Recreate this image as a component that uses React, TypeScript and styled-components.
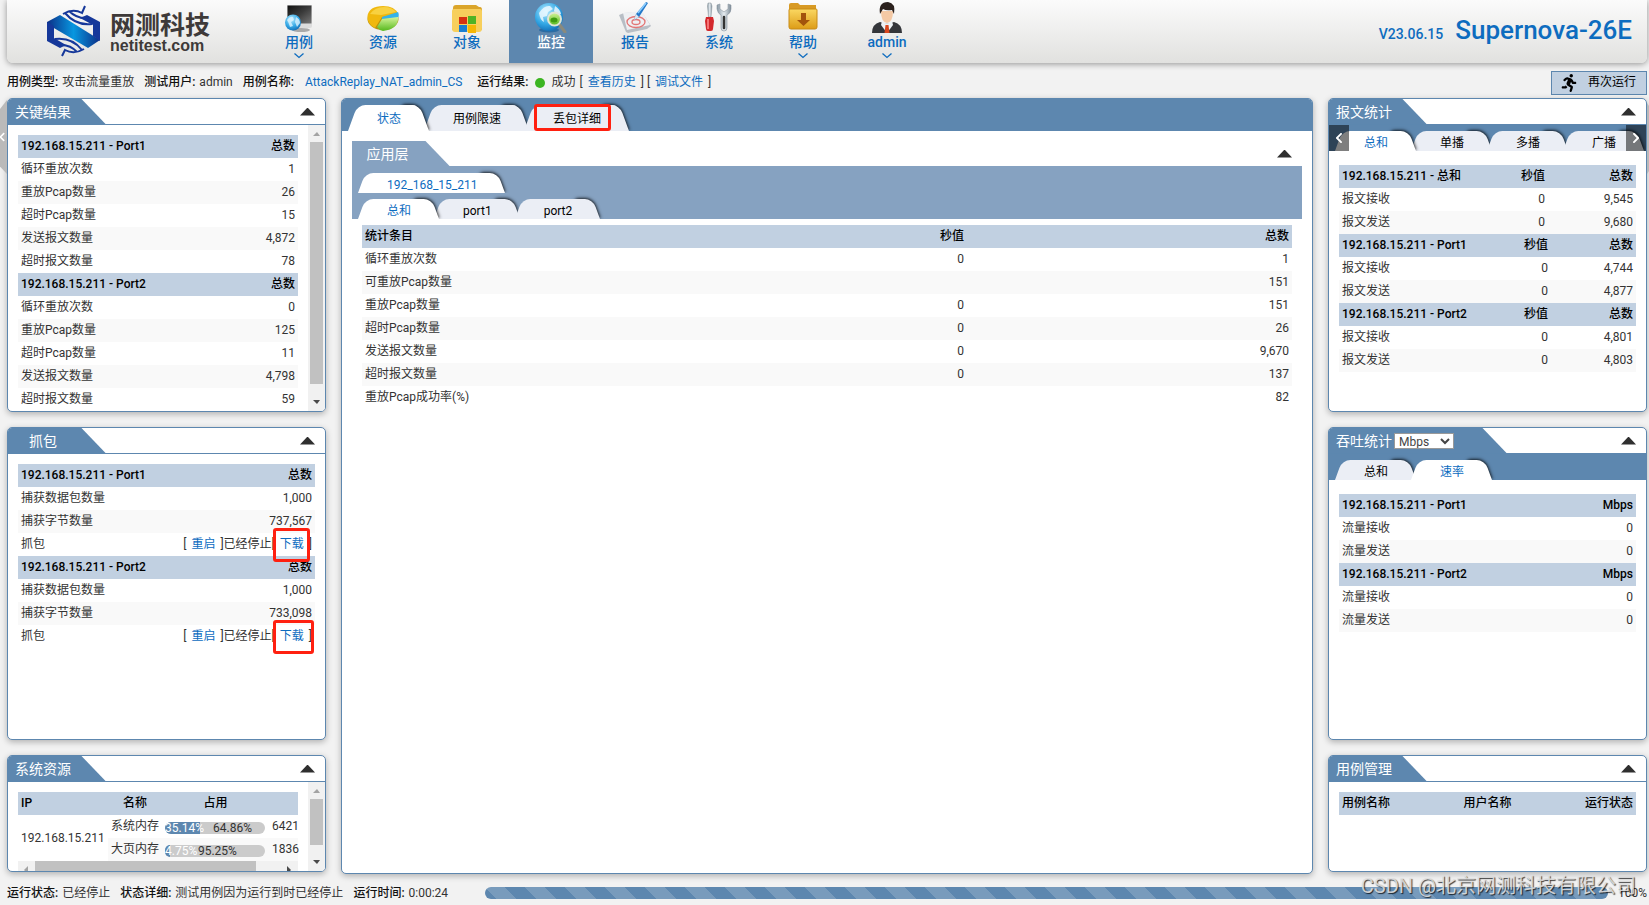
import React from 'react';
import styled, { createGlobalStyle, css } from 'styled-components';
import { FaRunning, FaChevronLeft, FaChevronRight } from 'react-icons/fa';

const c = {
  blue: '#5d87af',
  soft: '#86a2c1',
  head: '#c1d0e1',
  link: '#0d6cbf',
  text: '#333333',
  red: '#ff2010',
};

const GlobalStyle = createGlobalStyle`
  * { box-sizing: border-box; }
  body {
    margin: 0;
    background: #f2f2f2;
    color: ${c.text};
    font: 12px/23px Roboto, "Noto Sans CJK SC", sans-serif;
  }
  button, select { font: inherit; color: inherit; }
  a { color: ${c.link}; text-decoration: none; }
`;

const Page = styled.div`
  position: relative;
  display: flex;
  flex-direction: column;
  min-height: 100vh;
  overflow: hidden;
`;

/* ---------- top bar ---------- */

const TopBar = styled.header`
  display: flex;
  height: 63px;
  margin: 0 2px 0 7px;
  border-radius: 0 0 6px 6px;
  background: linear-gradient(#fbfbfb, #e1e1df);
  box-shadow: 0 1px 6px rgba(0, 0, 0, 0.4);
`;

const Brand = styled.a`
  display: flex;
  gap: 9px;
  width: 250px;
  padding: 5px 0 0 39px;
  color: #3e3a39;
`;

const BrandText = styled.span`
  display: flex;
  flex-direction: column;
  padding-top: 8px;
  font-weight: 700;
`;

const BrandName = styled.span`
  font-size: 25px;
  line-height: 26px;
`;

const BrandSite = styled.span`
  font: 700 16px/14px "Liberation Sans", sans-serif;
`;

const Nav = styled.nav`
  display: flex;
  flex: 1;
`;

const NavItem = styled.a<{ $active?: boolean }>`
  display: flex;
  flex-direction: column;
  align-items: center;
  width: 84px;
  padding-top: 1px;
  color: ${p => (p.$active ? '#fff' : c.link)};
  background: ${p => (p.$active ? c.blue : 'none')};
  font-size: 14px;
  font-weight: 500;
  line-height: 18px;
`;

const MenuMark = styled.svg`
  margin-top: 2px;
`;

const Product = styled.div`
  display: flex;
  align-items: baseline;
  gap: 12px;
  padding: 14px 15px 0 0;
  color: ${c.link};
  font-weight: 500;
  font-size: 14px;
  line-height: 32px;
`;

const ProductName = styled.strong`
  font-size: 26px;
  font-weight: 500;
`;

/* ---------- run summary ---------- */

const Summary = styled.div`
  display: flex;
  align-items: center;
  gap: 10px;
  height: 35px;
  padding: 4px 2px 0 7px;
`;

const Pair = styled.span`
  display: flex;
  align-items: center;
  gap: 4px;
  white-space: nowrap;
  & > b { font-weight: 500; color: #111; }
`;

const CaseLink = styled.a`
  padding: 0 5px 0 7px;
`;

const Dot = styled.i`
  width: 10px;
  height: 10px;
  margin: 0 3px 0 2px;
  border-radius: 50%;
  background: #3cb521;
`;

const InlineLink = styled.a`
  margin: 0 5px;
`;

const RerunButton = styled.button`
  display: flex;
  align-items: center;
  gap: 10px;
  height: 24px;
  margin-left: auto;
  padding: 0 10px 0 8px;
  border: 1px solid ${c.blue};
  background: ${c.head};
  color: #000;
`;

/* ---------- panels ---------- */

const Main = styled.main`
  display: grid;
  grid-template-columns: 319px minmax(0, 1fr) 319px;
  gap: 15px;
  flex: 1;
  padding: 0 2px 0 7px;
`;

const Column = styled.div`
  display: flex;
  flex-direction: column;
  gap: 15px;
  padding-bottom: 2px;
`;

const Panel = styled.section<{ $grow?: number }>`
  display: flex;
  flex-direction: column;
  flex: ${p => p.$grow ?? 1} 1 0;
  min-height: 0;
  overflow: hidden;
  border: 1px solid ${c.blue};
  border-radius: 5px;
  background: #fff;
  box-shadow: 0 2px 6px rgba(0, 0, 0, 0.28);
`;

const PanelHead = styled.div<{ $soft?: boolean }>`
  display: flex;
  flex: none;
  align-items: center;
  justify-content: space-between;
  height: 26px;
  padding-right: 10px;
  border-bottom: 1px solid ${p => (p.$soft ? c.soft : c.blue)};
`;

const PanelTitle = styled.h2<{ $soft?: boolean }>`
  display: flex;
  align-items: center;
  justify-content: center;
  min-width: 98px;
  height: 26px;
  margin: 0;
  padding: 0 ${p => (p.$soft ? '41px 0 14px' : '35px 0 7px')};
  background: ${p => (p.$soft ? c.soft : c.blue)};
  clip-path: polygon(0 0, calc(100% - 25px) 0, 100% 100%, 0 100%);
  color: #fff;
  font-size: 14px;
  font-weight: 400;
  line-height: 24px;
`;

const Collapse = styled.button`
  width: 15px;
  height: 8px;
  padding: 0;
  border: 0;
  background: #2f2f2f;
  clip-path: polygon(50% 0, 100% 100%, 0 100%);
`;

const Unit = styled.select`
  width: 60px;
  height: 16px;
  margin: 0 18px 0 2px;
  padding: 0;
  border: 1px solid #999;
  background: #fff;
  color: #444;
  font-size: 12px;
  line-height: 14px;
`;

const PanelBody = styled.div<{ $scroll?: boolean; $top?: number }>`
  display: flex;
  flex: 1 1 0;
  min-height: 0;
  overflow: hidden;
  padding: ${p => p.$top ?? 10}px ${p => (p.$scroll ? 0 : 10)}px 0 10px;
`;

const Content = styled.div`
  flex: 1;
  min-width: 0;
`;

/* ---------- tabs ---------- */

const TabStrip = styled.div<{ $soft?: boolean }>`
  position: relative;
  display: flex;
  flex: none;
  padding: 6px 0 0 9px;
  background: ${p => (p.$soft ? c.soft : c.blue)};
  overflow: hidden;
`;

const Tab = styled.button<{ $active?: boolean; $tall?: boolean }>`
  position: relative;
  z-index: ${p => (p.$active ? 1 : 0)};
  flex: none;
  isolation: isolate;
  height: ${p => (p.$tall ? 26 : 20)}px;
  padding: ${p => (p.$tall ? 3 : 4)}px 26px 0;
  border: 0;
  background: none;
  color: ${p => (p.$active ? c.link : '#000')};
  line-height: ${p => (p.$tall ? 23 : 16)}px;

  &::before,
  &::after {
    content: '';
    position: absolute;
    z-index: -1;
    top: 0;
    bottom: 0;
    border-radius: 8px 8px 0 0;
    background: ${p => (p.$active ? '#fff' : '#ebeef5')};
  }
  &::before {
    left: -3px;
    right: 16px;
    transform: skewX(-20deg);
    transform-origin: bottom;
  }
  &::after {
    z-index: -2;
    right: -2px;
    width: 22px;
    transform: skewX(20deg);
    transform-origin: bottom;
    box-shadow: 1px -1px 3px rgba(0, 0, 0, 0.8);
  }
`;

const StripArrow = styled.button<{ $right?: boolean }>`
  position: absolute;
  z-index: 2;
  top: 0;
  bottom: 0;
  ${p => (p.$right ? css`right: 0;` : css`left: 0;`)}
  display: flex;
  align-items: center;
  justify-content: center;
  width: 20px;
  padding: 0;
  border: 0;
  background: rgba(0, 0, 0, 0.5);
  color: #fff;
`;

/* ---------- tables ---------- */

const Table = styled.table`
  width: 100%;
  table-layout: fixed;
  border-collapse: collapse;
  th, td {
    height: 23px;
    padding: 0 3px;
    line-height: 23px;
    text-align: right;
    white-space: nowrap;
  }
  th { background: ${c.head}; color: #000; font-weight: 500; }
  th:first-child, td:first-child { text-align: left; }
  tbody tr:nth-child(even) { background: #f9f9f9; }
`;

const ManageTable = styled(Table)`
  th:nth-child(2) { text-align: center; }
`;

const ResourceTable = styled(Table)`
  th:nth-child(n), td:nth-child(n) { text-align: left; padding: 0 0 0 3px; }
  th:nth-child(2), th:nth-child(3) { text-align: center; padding: 0; }
  td[rowspan] { background: #fff; }
`;

const Usage = styled.div`
  display: flex;
  width: 100px;
  height: 12px;
  margin-top: 2px;
  border-radius: 6px;
  background: #cbcbcb;
  line-height: 13px;
`;

const Used = styled.span`
  flex: none;
  min-width: 0;
  height: 12px;
  border-radius: 6px 0 0 6px;
  background: ${c.blue};
  color: #fff;
`;

const Free = styled.span`
  flex: 1;
  text-align: center;
`;

const Marked = styled.span`
  position: relative;
`;

const Mark = styled.i<{ $wide?: boolean }>`
  position: absolute;
  top: -9px;
  left: 1px;
  right: ${p => (p.$wide ? -2 : 2)}px;
  height: 34px;
  border: 3px solid ${c.red};
  border-radius: 3px;
`;

const TabMark = styled.i`
  position: absolute;
  inset: -1px 16px 0 7px;
  border: 3px solid ${c.red};
  border-radius: 3px;
`;

/* ---------- scroll bars ---------- */

const VBar = styled.div`
  display: flex;
  flex: none;
  flex-direction: column;
  align-items: center;
  width: 17px;
  margin: -10px 0 0 10px;
  background: #f1f1f1;
`;

const HBar = styled.div`
  display: flex;
  align-items: center;
  height: 17px;
  background: #f1f1f1;
`;

const BarArrow = styled.span<{ $dim?: boolean; $side?: boolean; $flip?: boolean }>`
  flex: none;
  width: 17px;
  height: 17px;
  background: ${p => (p.$dim ? '#a3a3a3' : '#4a4a4a')};
  clip-path: ${p =>
    p.$side
      ? p.$flip
        ? 'polygon(6px 5px, 10px 9px, 6px 13px)'
        : 'polygon(10px 5px, 6px 9px, 10px 13px)'
      : p.$flip
        ? 'polygon(5px 6px, 12px 6px, 9px 10px)'
        : 'polygon(5px 11px, 12px 11px, 9px 7px)'};
`;

const VThumb = styled.span`
  width: 13px;
  background: #c1c1c1;
`;

const HThumb = styled.span`
  width: 221px;
  height: 17px;
  margin-right: auto;
  background: #c1c1c1;
`;

/* ---------- status bar ---------- */

const StatusBar = styled.footer`
  display: flex;
  align-items: center;
  gap: 10px;
  height: 31px;
  padding: 7px 2px 0 7px;
`;

const Progress = styled.div`
  flex: 1;
  height: 12px;
  margin-left: 27px;
  border-radius: 6px;
  background: ${c.blue}
    linear-gradient(45deg, rgba(255, 255, 255, 0.17) 25%, transparent 25%, transparent 50%,
      rgba(255, 255, 255, 0.17) 50%, rgba(255, 255, 255, 0.17) 75%, transparent 75%) 0 0 / 40px 40px;
`;

const Watermark = styled.span`
  position: absolute;
  right: 13px;
  bottom: 5px;
  color: rgba(225, 225, 225, 0.9);
  font-size: 20px;
  line-height: 28px;
  text-shadow: 1px 1px 1px rgba(0, 0, 0, 0.75);
`;

const SideHandle = styled.button<{ $right?: boolean }>`
  position: absolute;
  top: 100px;
  ${p => (p.$right ? css`right: 0; width: 2px;` : css`left: 0; width: 7px;`)}
  height: 74px;
  padding: 0;
  border: 0;
  background: #bababa;
  color: #fff;
  clip-path: ${p =>
    p.$right ? 'polygon(0 4%, 100% 8%, 100% 96%, 0 100%)' : 'polygon(0 12%, 100% 0, 100% 100%, 0 90%)'};
  svg { display: block; margin-left: -3px; }
`;

/* ---------- drawings ---------- */

const Logo = () => (
  <svg width="55" height="52" viewBox="0 0 55 52" aria-hidden="true">
    <defs>
      <linearGradient id="lg" x1="0" x2="1" y1="0" y2="0">
        <stop offset="0" stopColor="#0c2f87" />
        <stop offset="0.5" stopColor="#0897e0" />
        <stop offset="1" stopColor="#0c2f87" />
      </linearGradient>
    </defs>
    <path d="M1 17 L14 10 L54 35 L42 43 L1 19Z" fill="url(#lg)" />
    <path d="M1 17 L8 21 L8 33 L20 40 L14 43 L1 36Z" fill="#16389a" />
    <path d="M54 36 L47 31 L47 20 L34 13 L41 10 L54 17Z" fill="#16389a" />
    <path d="M17 9 Q27 3 36 8 L39 1 M19 8 Q30 21 46 19 M23 6 Q31 14 42 13 M38 44 Q28 50 19 45 L16 51 M36 45 Q26 32 9 34 M31 47 Q24 39 13 40" fill="none" stroke="#16389a" strokeWidth="2" />
  </svg>
);

const Chevron = () => (
  <MenuMark width="10" height="6" viewBox="0 0 10 6" aria-hidden="true">
    <path d="M0.5 0.5 L5 4.5 L9.5 0.5" fill="none" stroke={c.link} strokeWidth="1.3" />
  </MenuMark>
);

const Defs = () => (
  <defs>
    <linearGradient id="gold" x1="0" y1="0" x2="0" y2="1">
      <stop offset="0" stopColor="#fbd862" />
      <stop offset="1" stopColor="#dd9c17" />
    </linearGradient>
    <radialGradient id="globe" cx="0.4" cy="0.3" r="0.8">
      <stop offset="0" stopColor="#b8ecff" />
      <stop offset="0.55" stopColor="#35a9e6" />
      <stop offset="1" stopColor="#0a62ad" />
    </radialGradient>
    <linearGradient id="screen" x1="0" y1="0" x2="1" y2="1">
      <stop offset="0" stopColor="#111" />
      <stop offset="0.5" stopColor="#3b3b3b" />
      <stop offset="1" stopColor="#777" />
    </linearGradient>
    <linearGradient id="lime" x1="0" y1="0" x2="0" y2="1">
      <stop offset="0" stopColor="#d5f59a" />
      <stop offset="1" stopColor="#55b81c" />
    </linearGradient>
    <linearGradient id="steel" x1="0" y1="0" x2="1" y2="0">
      <stop offset="0" stopColor="#8797a3" />
      <stop offset="0.5" stopColor="#e7edf1" />
      <stop offset="1" stopColor="#7b8a96" />
    </linearGradient>
  </defs>
);

const drawings: Record<string, React.ReactNode> = {
  case: (
    <>
      <path d="M4 4h25v21q0 2-2 2H6q-2 0-2-2z" fill="#dcdcdc" />
      <path d="M4.500 4.500h24v18h-24z" fill="url(#screen)" />
      <ellipse cx="18" cy="29" rx="9" ry="2" fill="#a9a9a9" />
      <circle cx="10" cy="21.500" r="8" fill="url(#globe)" />
      <path d="M4 19q3-4 6-3l1 3-3 2 2 4-3 1q-1-4-3-7zM13 16q4 2 4 6l-3 4-2-5z" fill="#dff4ff" opacity="0.8" />
    </>
  ),
  resource: (
    <>
      <ellipse cx="16" cy="18" rx="15.500" ry="11" fill="#b9930c" />
      <path d="M0.500 15Q2 5 16 5q12 0 15 8L15 16 8 27Q0 23 0.500 15z" fill="#f0b80e" />
      <path d="M3 13Q8 6 17 6q8 0 12 5L14 14z" fill="#fbdc55" opacity="0.7" />
      <path d="M15 16l16-5q1.500 3 0 6l-16 1z" fill="#35b3e8" />
      <path d="M10 26l5-8 16-2q1 12-15 14-4-1-6-4z" fill="url(#lime)" />
    </>
  ),
  object: (
    <>
      <path d="M2 7q0-3 3-3h20l3 2h1q2 0 2 3v18q0 3-3 3H4q-3 0-3-3z" fill="#dba52a" />
      <path d="M1 10q0-2 2-2h26q2 0 2 2v17q0 4-3 4H4q-3 0-3-4z" fill="#f7cf5c" />
      <path d="M8 16h8v7H8z" fill="#d63310" />
      <path d="M17 15h8v8h-8z" fill="#4fb325" />
      <path d="M8 24h8v7H8z" fill="#1a7fd0" />
      <path d="M17 24h8v8h-8z" fill="#f4b706" />
    </>
  ),
  monitor: (
    <>
      <ellipse cx="14" cy="29" rx="10" ry="2.500" fill="#2b6ca3" />
      <circle cx="14" cy="16" r="14" fill="url(#globe)" />
      <path d="M4 12q5-8 11-7l3 3-5 3-1 4-4 1 1 5q-4-2-5-9zM20 5q5 3 6 8l-4 1-3-4z" fill="#eaf8ff" opacity="0.85" />
      <path d="M24 23l6 8" stroke="#8a8a7d" strokeWidth="3" strokeLinecap="round" />
      <circle cx="19.500" cy="18" r="6.500" fill="url(#lime)" stroke="#dfe6d6" strokeWidth="2" />
      <ellipse cx="19" cy="19" rx="3.500" ry="2.500" fill="#3f9d12" />
    </>
  ),
  report: (
    <>
      <path d="M5 12l18-1 9 14-4 3-19 4-2-1L0 14z" fill="#b8bec5" />
      <path d="M4 12l19-2 8 14-23 5z" fill="#eef0f3" />
      <ellipse cx="17" cy="21" rx="9" ry="5.500" fill="none" stroke="#e27676" strokeWidth="1.300" />
      <ellipse cx="17" cy="21" rx="4" ry="2.500" fill="none" stroke="#e27676" strokeWidth="1.300" />
      <path d="M27 1l2 1-9 14-5 3 2-6z" fill="#2378c9" />
      <path d="M27 2l-8 10" stroke="#8fd0ff" strokeWidth="1.500" />
      <path d="M17 13l3 3-5 3z" fill="#dce7f0" />
    </>
  ),
  system: (
    <>
      <path d="M5 2h3l1 3-1 11H5.500L4.500 5z" fill="url(#steel)" stroke="#8b949b" strokeWidth="0.500" />
      <path d="M3 16h7l1 4-1 8q0 2-2 2H5q-2 0-2-2l-1-8z" fill="#d3282c" />
      <path d="M5 18v10" stroke="#ff8d8d" strokeWidth="1.500" />
      <path d="M14 4v4q1 5 4 6v13q0 3 3 3t3-3V14q4-2 4-6V4l-3-1v5l-4 3-4-3V3z" fill="url(#steel)" stroke="#8a969f" strokeWidth="0.600" />
      <path d="M21 16v11" stroke="#333" strokeWidth="2.500" strokeLinecap="round" />
    </>
  ),
  help: (
    <>
      <path d="M2 4q0-2 2-2h7l2 2h16v5H2z" fill="#d89a24" />
      <path d="M2 9q0-1 1-1h26q1 0 1 1v17q0 2-2 2H4q-2 0-2-2z" fill="url(#gold)" stroke="#c88b17" />
      <path d="M14 12h5v7h4l-6.500 6-6.500-6h4z" fill="#a2530c" />
    </>
  ),
  admin: (
    <>
      <path d="M1 32q0-9 8-11l7 2 7-2q8 2 8 11z" fill="#34363a" />
      <path d="M11 20l5 3 5-3 1 4-6 8-6-8z" fill="#eef2f5" />
      <path d="M14.500 24h3l1 8h-5z" fill="#d9481f" />
      <path d="M10 10q0 11 6 12 6-1 6-12z" fill="#f4c9a5" />
      <path d="M9 13Q7 1 17 1q8 1 6 12l-2-4q-6 1-9-1z" fill="#2b211d" />
    </>
  ),
};

const navItems = [
  { id: 'case', label: '用例', menu: true },
  { id: 'resource', label: '资源' },
  { id: 'object', label: '对象' },
  { id: 'monitor', label: '监控', active: true },
  { id: 'report', label: '报告' },
  { id: 'system', label: '系统' },
  { id: 'help', label: '帮助', menu: true },
  { id: 'admin', label: 'admin', menu: true },
];

/* ---------- composed parts ---------- */

type Cell = React.ReactNode;

const Stats = ({ head, rows, widths }: { head: string[]; rows: Cell[][]; widths?: number[] }) => (
  <Table>
    <colgroup>
      <col />
      {(widths ?? [60]).map((w, i) => <col key={i} width={w} />)}
    </colgroup>
    <thead>
      <tr>{head.map((h, i) => <th key={i} scope="col">{h}</th>)}</tr>
    </thead>
    <tbody>
      {rows.map((r, i) => <tr key={i}>{r.map((v, j) => <td key={j}>{v}</td>)}</tr>)}
    </tbody>
  </Table>
);

const Head = ({ title, soft, children }: { title: string; soft?: boolean; children?: React.ReactNode }) => (
  <PanelHead $soft={soft}>
    <PanelTitle $soft={soft}>{title}{children}</PanelTitle>
    <Collapse aria-label={`收起${title}`} />
  </PanelHead>
);

const VScroll = ({ size }: { size: number }) => (
  <VBar aria-hidden="true">
    <BarArrow $dim />
    <VThumb style={{ flex: `${size} 1 0` }} />
    <span style={{ flex: `${1 - size} 1 0` }} />
    <BarArrow $flip />
  </VBar>
);

const Capture = ({ wide }: { wide?: boolean }) => (
  <>
    [<InlineLink href="#restart">重启</InlineLink>]已经停止
    <Marked>
      [<InlineLink href="#download">下载</InlineLink>]
      <Mark $wide={wide} />
    </Marked>
  </>
);

const UsageBar = ({ used, free }: { used: number; free: number }) => (
  <Usage>
    <Used style={{ width: `${used}%` }}>{used.toFixed(2)}%</Used>
    <Free>{free.toFixed(2)}%</Free>
  </Usage>
);

const port = (n: number) => `192.168.15.211 - Port${n}`;

const keyRows = (v: string[]): Cell[][] =>
  ['循环重放次数', '重放Pcap数量', '超时Pcap数量', '发送报文数量', '超时报文数量'].map((k, i) => [k, v[i]]);

export default function App() {
  return (
    <Page>
      <GlobalStyle />
      <TopBar>
        <Brand href="#home">
          <Logo />
          <BrandText>
            <BrandName>网测科技</BrandName>
            <BrandSite>netitest.com</BrandSite>
          </BrandText>
        </Brand>
        <Nav>
          {navItems.map(n => (
            <NavItem key={n.id} href={`#${n.id}`} $active={n.active}>
              <svg width="32" height="32" viewBox="0 0 32 32" aria-hidden="true">
                <Defs />
                {drawings[n.id]}
              </svg>
              {n.label}
              {n.menu && <Chevron />}
            </NavItem>
          ))}
        </Nav>
        <Product>
          V23.06.15 <ProductName>Supernova-26E</ProductName>
        </Product>
      </TopBar>

      <Summary>
        <Pair><b>用例类型:</b>攻击流量重放</Pair>
        <Pair><b>测试用户:</b>admin</Pair>
        <Pair><b>用例名称:</b><CaseLink href="#case-detail">AttackReplay_NAT_admin_CS</CaseLink></Pair>
        <Pair>
          <b>运行结果:</b>
          <Dot />
          成功
          <span>
            [<InlineLink href="#history">查看历史</InlineLink>] [<InlineLink href="#debug">调试文件</InlineLink>]
          </span>
        </Pair>
        <RerunButton><FaRunning size={18} />再次运行</RerunButton>
      </Summary>

      <Main>
        <Column>
          <Panel $grow={312}>
            <Head title="关键结果" />
            <PanelBody $scroll>
              <Content>
                <Stats head={[port(1), '总数']} rows={keyRows(['1', '26', '15', '4,872', '78'])} />
                <Stats head={[port(2), '总数']} rows={keyRows(['0', '125', '11', '4,798', '59'])} />
              </Content>
              <VScroll size={0.96} />
            </PanelBody>
          </Panel>
          <Panel $grow={311}>
            <Head title="抓包" />
            <PanelBody>
              <Content>
                <Stats
                  widths={[170]}
                  head={[port(1), '总数']}
                  rows={[['捕获数据包数量', '1,000'], ['捕获字节数量', '737,567'], ['抓包', <Capture key="c" />]]}
                />
                <Stats
                  widths={[170]}
                  head={[port(2), '总数']}
                  rows={[['捕获数据包数量', '1,000'], ['捕获字节数量', '733,098'], ['抓包', <Capture key="c" wide />]]}
                />
              </Content>
            </PanelBody>
          </Panel>
          <Panel $grow={115}>
            <Head title="系统资源" />
            <PanelBody $scroll>
              <Content>
                <ResourceTable>
                  <colgroup>
                    <col width="90" />
                    <col width="54" />
                    <col width="107" />
                    <col />
                  </colgroup>
                  <thead>
                    <tr><th>IP</th><th>名称</th><th>占用</th><th /></tr>
                  </thead>
                  <tbody>
                    <tr>
                      <td rowSpan={2}>192.168.15.211</td>
                      <td>系统内存</td>
                      <td><UsageBar used={35.14} free={64.86} /></td>
                      <td>6421</td>
                    </tr>
                    <tr>
                      <td>大页内存</td>
                      <td><UsageBar used={4.75} free={95.25} /></td>
                      <td>1836</td>
                    </tr>
                  </tbody>
                </ResourceTable>
                <HBar aria-hidden="true">
                  <BarArrow $dim $side />
                  <HThumb />
                  <BarArrow $side $flip />
                </HBar>
              </Content>
              <VScroll size={0.84} />
            </PanelBody>
          </Panel>
        </Column>

        <Panel>
          <TabStrip>
            <Tab $tall $active>状态</Tab>
            <Tab $tall>用例限速</Tab>
            <Tab $tall>丢包详细<TabMark /></Tab>
          </TabStrip>
          <PanelBody>
            <Content>
              <Head title="应用层" soft />
              <TabStrip $soft>
                <Tab $active>192_168_15_211</Tab>
              </TabStrip>
              <TabStrip $soft>
                <Tab $active>总和</Tab>
                <Tab>port1</Tab>
                <Tab>port2</Tab>
              </TabStrip>
              <PanelBody $top={6}>
                <Stats
                  widths={[300, 325]}
                  head={['统计条目', '秒值', '总数']}
                  rows={[
                    ['循环重放次数', '0', '1'],
                    ['可重放Pcap数量', '', '151'],
                    ['重放Pcap数量', '0', '151'],
                    ['超时Pcap数量', '0', '26'],
                    ['发送报文数量', '0', '9,670'],
                    ['超时报文数量', '0', '137'],
                    ['重放Pcap成功率(%)', '', '82'],
                  ]}
                />
              </PanelBody>
            </Content>
          </PanelBody>
        </Panel>

        <Column>
          <Panel $grow={312}>
            <Head title="报文统计" />
            <TabStrip>
              <StripArrow aria-label="向左"><FaChevronLeft size={12} /></StripArrow>
              <Tab $active>总和</Tab>
              <Tab>单播</Tab>
              <Tab>多播</Tab>
              <Tab>广播</Tab>
              <StripArrow $right aria-label="向右"><FaChevronRight size={12} /></StripArrow>
            </TabStrip>
            <PanelBody $top={14}>
              <Content>
                <Stats
                  widths={[60, 88]}
                  head={['192.168.15.211 - 总和', '秒值', '总数']}
                  rows={[['报文接收', '0', '9,545'], ['报文发送', '0', '9,680']]}
                />
                <Stats
                  widths={[60, 85]}
                  head={[port(1), '秒值', '总数']}
                  rows={[['报文接收', '0', '4,744'], ['报文发送', '0', '4,877']]}
                />
                <Stats
                  widths={[60, 85]}
                  head={[port(2), '秒值', '总数']}
                  rows={[['报文接收', '0', '4,801'], ['报文发送', '0', '4,803']]}
                />
              </Content>
            </PanelBody>
          </Panel>
          <Panel $grow={311}>
            <Head title="吞吐统计">
              <Unit aria-label="吞吐单位" defaultValue="Mbps">
                <option>Mbps</option>
              </Unit>
            </Head>
            <TabStrip>
              <Tab>总和</Tab>
              <Tab $active>速率</Tab>
            </TabStrip>
            <PanelBody $top={14}>
              <Content>
                <Stats head={[port(1), 'Mbps']} rows={[['流量接收', '0'], ['流量发送', '0']]} />
                <Stats head={[port(2), 'Mbps']} rows={[['流量接收', '0'], ['流量发送', '0']]} />
              </Content>
            </PanelBody>
          </Panel>
          <Panel $grow={115}>
            <Head title="用例管理" />
            <PanelBody>
              <Content>
                <ManageTable>
                  <thead>
                    <tr><th>用例名称</th><th>用户名称</th><th>运行状态</th></tr>
                  </thead>
                </ManageTable>
              </Content>
            </PanelBody>
          </Panel>
        </Column>
      </Main>

      <StatusBar>
        <Pair><b>运行状态:</b>已经停止</Pair>
        <Pair><b>状态详细:</b>测试用例因为运行到时已经停止</Pair>
        <Pair><b>运行时间:</b>0:00:24</Pair>
        <Progress role="progressbar" aria-valuenow={100} aria-label="运行进度" />
        <span>100%</span>
      </StatusBar>

      <SideHandle aria-label="上一页">
        <FaChevronLeft size={10} />
      </SideHandle>
      <SideHandle $right aria-label="下一页" />
      <Watermark>CSDN @北京网测科技有限公司</Watermark>
    </Page>
  );
}
